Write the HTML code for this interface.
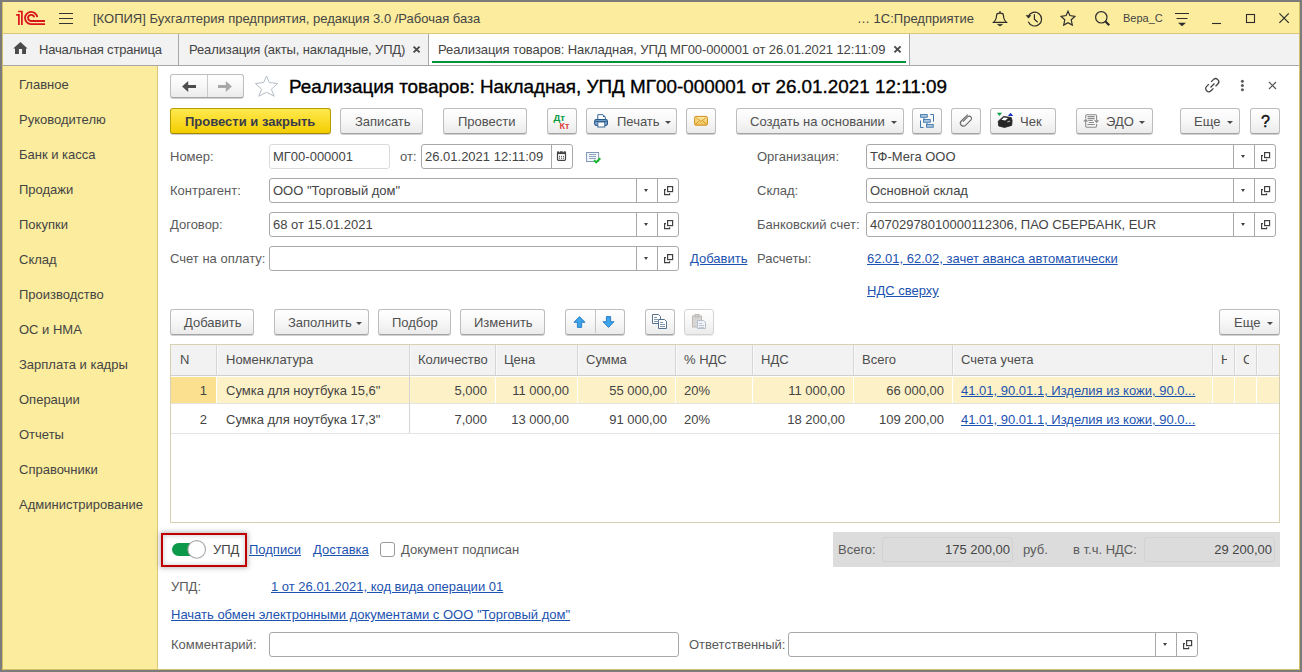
<!DOCTYPE html>
<html><head><meta charset="utf-8">
<style>
*{box-sizing:border-box;margin:0;padding:0}
html,body{width:1302px;height:672px;overflow:hidden;position:relative;background:#7b7b7b;font-family:"Liberation Sans",sans-serif;font-size:13px;color:#444}
.a{position:absolute}
.t{position:absolute;white-space:pre;line-height:16px}
.btn{position:absolute;height:26px;border:1px solid #bdbdbd;border-bottom-color:#a3a3a3;border-radius:3px;background:linear-gradient(#ffffff 0%,#f7f7f7 50%,#ebebeb 100%);box-shadow:0 1px 0 rgba(0,0,0,.18);color:#505050;white-space:pre;line-height:16px}
.btn .t{top:5px}
.ybtn{background:linear-gradient(#ffe94f,#f3cd00);border-color:#b89d00;border-bottom-color:#a08800;color:#3a3b4a}
.ybtn .t{font-weight:bold}
.fld{position:absolute;height:25px;border:1px solid #b5b5b5;border-radius:3px;background:#fff;white-space:pre;color:#444}
.fld .t{top:4px;left:3px}
.lbl{position:absolute;white-space:pre;color:#5a5a5a;line-height:16px}
.lnk{position:absolute;white-space:pre;color:#1c52b0;text-decoration:underline;line-height:16px}
.sep{position:absolute;top:0;width:1px;height:23px;background:#b5b5b5}
.tri{position:absolute;width:0;height:0;border-left:3px solid transparent;border-right:3px solid transparent;border-top:3px solid #4a4a4a}
.opn{position:absolute;width:11px;height:10px}
.side .t{left:19px;color:#444}
.hd{position:absolute;top:352px;white-space:pre;line-height:16px;color:#4d4d4d}
.r1{position:absolute;top:383px;white-space:pre;line-height:16px;color:#444}
.r2{position:absolute;top:412px;white-space:pre;line-height:16px;color:#444}
.rr{text-align:right}
</style></head><body>
<!-- window frame -->
<div class="a" style="left:2px;top:2px;width:1298px;height:668px;background:#fff;border:1px solid #d2bf6a;border-top:0"></div>
<!-- title bar -->
<div class="a" style="left:3px;top:2px;width:1296px;height:32px;background:#fbec9e;border-bottom:1px solid #d9c77a"></div>
<!-- tab bar -->
<div class="a" style="left:3px;top:34px;width:1296px;height:32px;background:#f2f2f2;border-bottom:1px solid #a8a8a8"></div>
<!-- sidebar -->
<div class="a" style="left:3px;top:66px;width:155px;height:603px;background:#fbec9e;border-right:1px solid #d9c77a"></div>

<!-- title contents -->
<svg class="a" style="left:0;top:0" width="1302" height="34" viewBox="0 0 1302 34">
 <g fill="none" stroke="#d9141b" stroke-width="1.8">
  <path d="M16.2 14.8 H18.9 V24.9 M18.1 11.5 H21.9 V24.9" stroke-width="1.7"/>
  <path d="M37.2 17.2 A6.1 6.1 0 1 0 31 24.05 H45"/>
  <path d="M34.2 17.3 A3.1 3.1 0 1 0 31 21.0 H45"/>
 </g>
 <g stroke="#333" stroke-width="1.2">
  <path d="M59 13.5 H73 M59 18.5 H73 M59 23.5 H73" stroke-width="1.15"/>
 </g>
 <!-- bell -->
 <g fill="none" stroke="#2b2b2b" stroke-width="1.2">
  <path d="M997.2 13.6 Q1000 12.6 1002.8 13.6 Q1003.6 15 1003.8 18 Q1004 20 1006.5 22.4 H993.5 Q996 20 996.2 18 Q996.4 15 997.2 13.6 Z"/>
  <path d="M1000 11.2 V12.8" stroke-width="1.6"/>
  <path d="M997.6 24.4 H1002.4 L1000 26 Z" fill="#2b2b2b" stroke-width="0.8"/>
 </g>
 <!-- history -->
 <g fill="none" stroke="#2b2b2b" stroke-width="1.2">
  <path d="M1028.4 16.2 A6.9 6.9 0 1 1 1028.3 21.7"/>
  <path d="M1034.4 14.2 V19.3 L1037.7 22.2"/>
  <path d="M1026.2 15.4 H1030.8 L1028.5 18.2 Z" fill="#2b2b2b" stroke-width="0.6"/>
 </g>
 <!-- star -->
 <path fill="none" stroke="#2b2b2b" stroke-width="1.2" stroke-linejoin="miter" d="M1068 11.2 L1069.9 15.5 L1074.9 16.4 L1071.2 19.8 L1072.3 25 L1068 22.7 L1063.7 25 L1064.8 19.8 L1061.1 16.4 L1066.1 15.5 Z"/>
 <!-- search -->
 <g fill="none" stroke="#2b2b2b">
  <circle cx="1101.3" cy="17.3" r="5.7" stroke-width="1.2"/>
  <path d="M1105.2 21.2 L1109.2 25.2" stroke-width="2.2"/>
 </g>
 <!-- menu -->
 <g stroke="#2b2b2b" stroke-width="1.2">
  <path d="M1175 13.5 H1189 M1176.5 18.5 H1187.5" stroke-width="1.1"/>
  <path d="M1178.6 23 H1185.4 L1182 26 Z" fill="#2b2b2b" stroke-width="0.5"/>
 </g>
 <!-- min max close -->
 <g fill="none" stroke="#2b2b2b" stroke-width="1.2">
  <path d="M1212 23.5 H1221" stroke-width="1.1"/>
  <rect x="1246.5" y="14.5" width="8" height="8" stroke-width="1.1"/>
  <path d="M1279.4 13.4 L1288.8 22.8 M1288.8 13.4 L1279.4 22.8"/>
 </g>
</svg>
<div class="t" style="left:93px;top:11px;color:#444">[КОПИЯ] Бухгалтерия предприятия, редакция 3.0 /Рабочая база</div>
<div class="t" style="left:857px;top:11px;color:#444">… 1С:Предприятие</div>
<div class="t" style="left:1123px;top:11px;font-size:11px;line-height:14px;color:#444">Вера_С</div>

<!-- tabs contents -->
<div class="a" style="left:178px;top:34px;width:1px;height:31px;background:#a8a8a8"></div>
<div class="a" style="left:428px;top:34px;width:1px;height:31px;background:#a8a8a8"></div>
<div class="a" style="left:429px;top:34px;width:480px;height:31px;background:#fff"></div>
<div class="a" style="left:909px;top:34px;width:1px;height:31px;background:#a8a8a8"></div>
<div class="a" style="left:432px;top:61px;width:474px;height:2px;background:#04923b"></div>
<svg class="a" style="left:0;top:34px" width="1302" height="32" viewBox="0 34 1302 32">
 <path fill="#4a4a4a" d="M20.4 42 L27.6 48.6 H26 V54 H22.1 V48.9 H18.9 V54 H15 V48.6 H13.2 Z"/>
 <g stroke="#4a4a4a" stroke-width="1.9">
  <path d="M413.6 46.6 L419.6 52.4 M419.6 46.6 L413.6 52.4"/>
  <path d="M894.4 46.4 L900.6 52.4 M900.6 46.4 L894.4 52.4"/>
 </g>
</svg>
<div class="t" style="left:39px;top:42px;color:#444;letter-spacing:-0.17px">Начальная страница</div>
<div class="t" style="left:189px;top:42px;color:#444;letter-spacing:-0.12px">Реализация (акты, накладные, УПД)</div>
<div class="t" style="left:438px;top:42px;color:#444;letter-spacing:-0.09px">Реализация товаров: Накладная, УПД МГ00-000001 от 26.01.2021 12:11:09</div>
<!-- sidebar items -->
<div class="side">
<div class="t" style="top:77px">Главное</div>
<div class="t" style="top:112px">Руководителю</div>
<div class="t" style="top:147px">Банк и касса</div>
<div class="t" style="top:182px">Продажи</div>
<div class="t" style="top:217px">Покупки</div>
<div class="t" style="top:252px">Склад</div>
<div class="t" style="top:287px">Производство</div>
<div class="t" style="top:322px">ОС и НМА</div>
<div class="t" style="top:357px">Зарплата и кадры</div>
<div class="t" style="top:392px">Операции</div>
<div class="t" style="top:427px">Отчеты</div>
<div class="t" style="top:462px">Справочники</div>
<div class="t" style="top:497px">Администрирование</div>
</div>

<!-- doc header -->
<div class="btn" style="left:170px;top:74px;width:74px;height:24px"></div>
<div class="a" style="left:207px;top:75px;width:1px;height:22px;background:#c9c9c9"></div>
<svg class="a" style="left:0;top:66px" width="1302" height="40" viewBox="0 66 1302 40">
 <path fill="#4d4d4d" d="M182.1 86.5 L188.2 81 V85 H196 V88 H188.2 V92.1 Z"/>
 <path fill="#a8a8a8" d="M231.9 86.5 L225.8 81 V85 H218 V88 H225.8 V92.1 Z"/>
 <path fill="none" stroke="#b4bcc6" stroke-width="1" d="M266.5 76 L269.3 82.5 L277.6 83.5 L271.4 89.2 L274.2 96.2 L266.5 92.3 L258.8 96.2 L261.6 89.2 L255.4 83.5 L263.7 82.5 Z"/>
 <!-- link icon -->
 <g fill="none" stroke="#444" stroke-width="1.3" stroke-linecap="butt">
  <path d="M1208.9 84.1 L1206.6 86.4 A3.1 3.1 0 0 0 1211 90.8 L1213.4 88.4"/>
  <path d="M1211.1 81.9 L1213.4 79.6 A3.1 3.1 0 0 1 1217.8 84 L1215.5 86.3"/>
  <path d="M1210.5 87.5 L1214.5 83.5"/>
 </g>
 <g fill="#5a5a5a"><circle cx="1242.4" cy="81.2" r="1.5"/><circle cx="1242.4" cy="85.5" r="1.5"/><circle cx="1242.4" cy="89.7" r="1.5"/></g>
 <path stroke="#555" stroke-width="1.2" d="M1269 82 L1276 89 M1276 82 L1269 89"/>
</svg>
<div class="t" style="left:289px;top:76px;font-size:18.88px;line-height:22px;color:#000;-webkit-text-stroke:0.35px #000">Реализация товаров: Накладная, УПД МГ00-000001 от 26.01.2021 12:11:09</div>

<!-- toolbar -->
<div class="btn ybtn" style="left:170px;top:108px;width:161px"><div class="t" style="left:14px;top:5px">Провести и закрыть</div></div>
<div class="btn" style="left:340px;top:108px;width:83px"><div class="t" style="left:14px">Записать</div></div>
<div class="btn" style="left:443px;top:108px;width:84px"><div class="t" style="left:14px">Провести</div></div>
<div class="btn" style="left:547px;top:108px;width:30px"></div>
<div class="t" style="left:553.5px;top:112px;font-size:9.5px;line-height:12px;font-weight:bold;color:#0a9a3e">Дт</div>
<div class="t" style="left:559.5px;top:120px;font-size:9px;line-height:12px;font-weight:bold;color:#e03c3c">Кт</div>
<div class="btn" style="left:586px;top:108px;width:91px"><div class="t" style="left:30px">Печать</div><div class="tri" style="left:78px;top:11.5px"></div></div>
<div class="btn" style="left:686px;top:108px;width:30px"></div>
<div class="btn" style="left:736px;top:108px;width:168px"><div class="t" style="left:13px">Создать на основании</div><div class="tri" style="left:154px;top:11.5px"></div></div>
<div class="btn" style="left:912px;top:108px;width:30px"></div>
<div class="btn" style="left:951px;top:108px;width:30px"></div>
<div class="btn" style="left:990px;top:108px;width:66px"><div class="t" style="left:29px">Чек</div></div>
<div class="btn" style="left:1076px;top:108px;width:77px"><div class="t" style="left:29px">ЭДО</div><div class="tri" style="left:62px;top:11.5px"></div></div>
<div class="btn" style="left:1180px;top:108px;width:60px"><div class="t" style="left:13px">Еще</div><div class="tri" style="left:46px;top:11.5px"></div></div>
<div class="btn" style="left:1250px;top:108px;width:30px"><div class="t" style="left:10px;top:2.6px;font-size:16px;line-height:20px;font-weight:normal;color:#111;-webkit-text-stroke:0.45px #111">?</div></div>
<svg class="a" style="left:0;top:106px" width="1302" height="30" viewBox="0 106 1302 30">
 <!-- printer -->
 <path fill="#fff" stroke="#3a6a9a" stroke-width="1" d="M597.8 119.5 V114.7 H603 L605.3 117 V119.5"/>
 <path fill="#3a6a9a" d="M603 114.7 V117 H605.3 Z"/>
 <rect x="594.7" y="119.7" width="12.7" height="5.6" rx="1.5" fill="#8fb0d4" stroke="#285a8c" stroke-width="1.2"/>
 <path fill="#285a8c" d="M595.5 121 H606.6 V122 H595.5 Z"/>
 <rect x="597.8" y="122" width="7" height="5" fill="#fff" stroke="#3a6a9a" stroke-width="1"/>
 <!-- envelope -->
 <defs><linearGradient id="env" x1="0" y1="0" x2="0" y2="1"><stop offset="0" stop-color="#fde9a6"/><stop offset="1" stop-color="#efbf55"/></linearGradient></defs>
 <rect x="694.6" y="116.4" width="12.8" height="8.8" rx="1.3" fill="url(#env)" stroke="#d2901e" stroke-width="1"/>
 <path fill="none" stroke="#d2901e" stroke-width="0.8" d="M695.5 117.3 L701 121.5 L706.5 117.3 M695.5 124.5 L699.5 120.5 M706.5 124.5 L702.5 120.5"/>
 <!-- structure -->
 <g stroke="#3f78aa" stroke-width="1">
  <rect x="920.6" y="114.6" width="6.6" height="2.6" fill="#bcd2e8"/>
  <rect x="923.6" y="119.6" width="6.6" height="2.6" fill="#bcd2e8"/>
  <rect x="926.6" y="124.6" width="6.6" height="2.6" fill="#bcd2e8"/>
  <path fill="none" d="M924 117.5 V119.5 M927 122.5 V124.5 M930.3 114.5 H933.5 V121.7 M920.5 120.5 V127.5 H923.5"/>
 </g>
 <!-- clip -->
 <path fill="none" stroke="#666" stroke-width="1.1" d="M967.8 114.6 L961.3 121 A3 3 0 0 0 965.5 125.3 L971 119.8 A2.2 2.2 0 0 0 967.9 116.7 L962.9 121.7"/>
 <!-- cheque printer -->
 <path fill="#0aa14a" d="M996.9 112.8 H1002.1 L999.5 116 Z"/>
 <path fill="#1a33c8" d="M1007.9 116 H1013.2 L1010.5 112.8 Z"/>
 <path fill="#262626" stroke="#262626" stroke-width="0.8" stroke-linejoin="round" d="M998.2 121.2 L1003.5 116.4 L1011.2 117.5 L1012.1 120.5 L1011.7 125.4 L1004.5 127.5 L998.7 126 Z"/>
 <path fill="#fff" d="M1001.4 119.7 L1003.9 117.4 L1008 118.1 L1005.4 120.4 Z"/>
 <path fill="#bbb" d="M1007.2 121.4 L1009.9 120.4 L1010.3 121.5 L1007.6 122.5 Z"/>
 <!-- EDO -->
 <g fill="none" stroke="#8c8c8c" stroke-width="1.1">
  <path d="M1085.7 118.5 V115.8 Q1085.7 114.7 1086.8 114.7 H1095.5 Q1096.6 114.7 1096.6 115.8 V120.5 M1096.6 124 V126.1 Q1096.6 127.2 1095.5 127.2 H1086.8 Q1085.7 127.2 1085.7 126.1 V121"/>
  <path d="M1087.5 116.6 H1094.7 M1087.5 118.6 H1094.7 M1088.3 120.5 H1092.9 M1088.8 122.5 H1093.9 M1087.5 124.5 H1094.7"/>
 </g>
 <path fill="#8c8c8c" d="M1083 121.6 L1085.7 118.7 L1088.4 121.6 Z M1094 120.3 H1099.2 L1096.6 123.3 Z"/>
</svg>

<!-- form -->
<div class="lbl" style="left:170px;top:149px">Номер:</div>
<div class="fld" style="left:269px;top:144px;width:121px;border-color:#dadada"><div class="t" style="left:3px;top:4px">МГ00-000001</div></div>
<div class="lbl" style="left:400px;top:149px">от:</div>
<div class="fld" style="left:421px;top:144px;width:152px;border-color:#a9a9a9"><div class="t" style="left:3px;top:4px">26.01.2021 12:11:09</div></div>
<div class="a" style="left:551px;top:145px;width:1px;height:23px;background:#a9a9a9"></div>
<svg class="a" style="left:550px;top:144px" width="60" height="25" viewBox="550 144 60 25">
 <rect x="557.5" y="152" width="8" height="8.3" rx="1" fill="#fff" stroke="#444" stroke-width="1.2"/>
 <rect x="557" y="151.5" width="9" height="2.6" fill="#444"/>
 <g fill="#444"><circle cx="559.5" cy="156.3" r=".6"/><circle cx="561.5" cy="156.3" r=".6"/><circle cx="563.5" cy="156.3" r=".6"/><circle cx="559.5" cy="158.2" r=".6"/><circle cx="561.5" cy="158.2" r=".6"/><circle cx="563.5" cy="158.2" r=".6"/></g>
 <path fill="#fff" d="M558.8 151 h1 v1.2 h-1z M562.8 151 h1 v1.2 h-1z"/>
 <rect x="586.6" y="152.5" width="12" height="9" fill="#f4f7fb" stroke="#7f96b6" stroke-width="1"/>
 <path stroke="#8ea2bd" stroke-width="1" d="M589 154.5 H596 M589 156.5 H596 M589 158.5 H596"/>
 <path fill="none" stroke="#18b82a" stroke-width="2" d="M594.2 160.2 L596.2 162.4 L600.3 158.3"/>
</svg>
<div class="lbl" style="left:170px;top:183px">Контрагент:</div>
<div class="fld" style="left:269px;top:178px;width:410px;border-color:#a9a9a9"><div class="t" style="left:3px;top:4px">ООО "Торговый дом"</div></div><div class="a" style="left:636px;top:179px;width:1px;height:23px;background:#a9a9a9"></div><div class="a" style="left:644px;top:189px;width:0;height:0;border-left:2.5px solid transparent;border-right:2.5px solid transparent;border-top:3px solid #404040"></div><div class="a" style="left:657px;top:179px;width:1px;height:23px;background:#a9a9a9"></div><svg class="a" style="left:657px;top:178px" width="21" height="25" viewBox="0 0 21 25"><g fill="none" stroke="#404040" stroke-width="1.2"><rect x="10.6" y="8.6" width="5" height="5"/><path d="M9 11.6 H7.6 V16.6 H12.6 V15.2"/></g></svg>
<div class="lbl" style="left:170px;top:217px">Договор:</div>
<div class="fld" style="left:269px;top:212px;width:410px;border-color:#a9a9a9"><div class="t" style="left:3px;top:4px">68 от 15.01.2021</div></div><div class="a" style="left:636px;top:213px;width:1px;height:23px;background:#a9a9a9"></div><div class="a" style="left:644px;top:223px;width:0;height:0;border-left:2.5px solid transparent;border-right:2.5px solid transparent;border-top:3px solid #404040"></div><div class="a" style="left:657px;top:213px;width:1px;height:23px;background:#a9a9a9"></div><svg class="a" style="left:657px;top:212px" width="21" height="25" viewBox="0 0 21 25"><g fill="none" stroke="#404040" stroke-width="1.2"><rect x="10.6" y="8.6" width="5" height="5"/><path d="M9 11.6 H7.6 V16.6 H12.6 V15.2"/></g></svg>
<div class="lbl" style="left:170px;top:251px">Счет на оплату:</div>
<div class="fld" style="left:269px;top:246px;width:410px;border-color:#a9a9a9"></div><div class="a" style="left:636px;top:247px;width:1px;height:23px;background:#a9a9a9"></div><div class="a" style="left:644px;top:257px;width:0;height:0;border-left:2.5px solid transparent;border-right:2.5px solid transparent;border-top:3px solid #404040"></div><div class="a" style="left:657px;top:247px;width:1px;height:23px;background:#a9a9a9"></div><svg class="a" style="left:657px;top:246px" width="21" height="25" viewBox="0 0 21 25"><g fill="none" stroke="#404040" stroke-width="1.2"><rect x="10.6" y="8.6" width="5" height="5"/><path d="M9 11.6 H7.6 V16.6 H12.6 V15.2"/></g></svg>
<div class="lnk" style="left:690px;top:251px">Добавить</div>
<div class="lbl" style="left:757px;top:149px">Организация:</div>
<div class="fld" style="left:866px;top:144px;width:410px;border-color:#a9a9a9"><div class="t" style="left:3px;top:4px">ТФ-Мега ООО</div></div><div class="a" style="left:1233px;top:145px;width:1px;height:23px;background:#a9a9a9"></div><div class="a" style="left:1241px;top:155px;width:0;height:0;border-left:2.5px solid transparent;border-right:2.5px solid transparent;border-top:3px solid #404040"></div><div class="a" style="left:1254px;top:145px;width:1px;height:23px;background:#a9a9a9"></div><svg class="a" style="left:1254px;top:144px" width="21" height="25" viewBox="0 0 21 25"><g fill="none" stroke="#404040" stroke-width="1.2"><rect x="10.6" y="8.6" width="5" height="5"/><path d="M9 11.6 H7.6 V16.6 H12.6 V15.2"/></g></svg>
<div class="lbl" style="left:757px;top:183px">Склад:</div>
<div class="fld" style="left:866px;top:178px;width:410px;border-color:#a9a9a9"><div class="t" style="left:3px;top:4px">Основной склад</div></div><div class="a" style="left:1233px;top:179px;width:1px;height:23px;background:#a9a9a9"></div><div class="a" style="left:1241px;top:189px;width:0;height:0;border-left:2.5px solid transparent;border-right:2.5px solid transparent;border-top:3px solid #404040"></div><div class="a" style="left:1254px;top:179px;width:1px;height:23px;background:#a9a9a9"></div><svg class="a" style="left:1254px;top:178px" width="21" height="25" viewBox="0 0 21 25"><g fill="none" stroke="#404040" stroke-width="1.2"><rect x="10.6" y="8.6" width="5" height="5"/><path d="M9 11.6 H7.6 V16.6 H12.6 V15.2"/></g></svg>
<div class="lbl" style="left:757px;top:217px">Банковский счет:</div>
<div class="fld" style="left:866px;top:212px;width:410px;border-color:#a9a9a9"><div class="t" style="left:3px;top:4px">40702978010000112306, ПАО СБЕРБАНК, EUR</div></div><div class="a" style="left:1233px;top:213px;width:1px;height:23px;background:#a9a9a9"></div><div class="a" style="left:1241px;top:223px;width:0;height:0;border-left:2.5px solid transparent;border-right:2.5px solid transparent;border-top:3px solid #404040"></div><div class="a" style="left:1254px;top:213px;width:1px;height:23px;background:#a9a9a9"></div><svg class="a" style="left:1254px;top:212px" width="21" height="25" viewBox="0 0 21 25"><g fill="none" stroke="#404040" stroke-width="1.2"><rect x="10.6" y="8.6" width="5" height="5"/><path d="M9 11.6 H7.6 V16.6 H12.6 V15.2"/></g></svg>
<div class="lbl" style="left:757px;top:251px">Расчеты:</div>
<div class="lnk" style="left:867px;top:251px">62.01, 62.02, зачет аванса автоматически</div>
<div class="lnk" style="left:867px;top:283px">НДС сверху</div>

<!-- table toolbar -->
<div class="btn" style="left:170px;top:309px;width:84px"><div class="t" style="left:13px">Добавить</div></div>
<div class="btn" style="left:274px;top:309px;width:95px"><div class="t" style="left:13px">Заполнить</div><div class="tri" style="left:81px;top:11.5px"></div></div>
<div class="btn" style="left:378px;top:309px;width:73px"><div class="t" style="left:13px">Подбор</div></div>
<div class="btn" style="left:460px;top:309px;width:85px"><div class="t" style="left:13px">Изменить</div></div>
<div class="btn" style="left:565px;top:309px;width:60px"></div>
<div class="a" style="left:595px;top:310px;width:1px;height:23px;background:#c4c4c4"></div>
<div class="btn" style="left:645px;top:309px;width:30px"></div>
<div class="btn" style="left:684px;top:309px;width:30px;border-color:#d4d4d4;box-shadow:0 1px 0 rgba(0,0,0,.08)"></div>
<div class="btn" style="left:1219px;top:309px;width:61px"><div class="t" style="left:14px">Еще</div><div class="tri" style="left:47px;top:11.5px"></div></div>
<svg class="a" style="left:560px;top:306px" width="160" height="32" viewBox="560 306 160 32">
 <path fill="#3ea4ea" stroke="#2178c4" stroke-width="0.9" d="M579.5 316.6 L585 322.3 H581.6 V327.4 H577.4 V322.3 H574 Z"/>
 <path fill="#3ea4ea" stroke="#2178c4" stroke-width="0.9" d="M608.5 327.4 L614 321.7 H610.6 V316.6 H606.4 V321.7 H603 Z"/>
 <g stroke="#58718f" stroke-width="1">
  <path fill="#fff" d="M652.5 314.5 H658.5 L660.5 316.5 V323.5 H652.5 Z"/>
  <path fill="#fff" d="M658.5 319.5 H664.5 L666.5 321.5 V328.5 H658.5 Z"/>
  <path fill="none" stroke="#8196b0" stroke-width="1" d="M654 317.5 H657 M654 319.5 H659 M654 321.5 H659 M660 322.5 H663 M660 324.5 H665 M660 326.5 H665"/>
 </g>
 <g stroke="#b9b9b9" stroke-width="1">
  <rect x="692.5" y="316" width="9" height="11" fill="#d6d6d6" stroke="#c2b8ae"/>
  <rect x="695" y="314.5" width="4" height="2.5" fill="#d0d0d0"/>
  <path fill="#eef1f5" stroke="#b6c0cc" d="M697.5 320.5 H703.5 L705.5 322.5 V328.5 H697.5 Z"/>
  <path fill="none" stroke="#c0c8d2" stroke-width="1" d="M699 323.5 H702 M699 325.5 H704 M699 327.5 H704"/>
 </g>
</svg>
<!-- table -->
<div class="a" style="left:170px;top:344px;width:1110px;height:179px;border:1px solid #d7d0b3;background:#fff"></div>
<div class="a" style="left:171px;top:345px;width:1108px;height:30px;background:#f2f2f2"></div>
<div class="a" style="left:171px;top:375px;width:1108px;height:1px;background:#cfcfcf"></div>
<div class="a" style="left:171px;top:377px;width:1108px;height:26px;background:#fdf2c7"></div>
<div class="a" style="left:171px;top:377px;width:45px;height:26px;background:#fbe08f"></div>
<div class="a" style="left:171px;top:403px;width:1108px;height:1px;background:#e4e4e4"></div>
<div class="a" style="left:171px;top:433px;width:1108px;height:1px;background:#e4e4e4"></div>
<div class="a" style="left:216px;top:345px;width:1px;height:30px;background:#d6d6d6"></div><div class="a" style="left:217px;top:345px;width:1px;height:30px;background:#fafafa"></div><div class="a" style="left:216px;top:377px;width:1px;height:26px;background:#fff"></div>
<div class="a" style="left:409px;top:345px;width:1px;height:30px;background:#d6d6d6"></div><div class="a" style="left:410px;top:345px;width:1px;height:30px;background:#fafafa"></div><div class="a" style="left:409px;top:377px;width:1px;height:26px;background:#fff"></div>
<div class="a" style="left:495px;top:345px;width:1px;height:30px;background:#d6d6d6"></div><div class="a" style="left:496px;top:345px;width:1px;height:30px;background:#fafafa"></div><div class="a" style="left:495px;top:377px;width:1px;height:26px;background:#fff"></div>
<div class="a" style="left:577px;top:345px;width:1px;height:30px;background:#d6d6d6"></div><div class="a" style="left:578px;top:345px;width:1px;height:30px;background:#fafafa"></div><div class="a" style="left:577px;top:377px;width:1px;height:26px;background:#fff"></div>
<div class="a" style="left:675px;top:345px;width:1px;height:30px;background:#d6d6d6"></div><div class="a" style="left:676px;top:345px;width:1px;height:30px;background:#fafafa"></div><div class="a" style="left:675px;top:377px;width:1px;height:26px;background:#fff"></div>
<div class="a" style="left:752px;top:345px;width:1px;height:30px;background:#d6d6d6"></div><div class="a" style="left:753px;top:345px;width:1px;height:30px;background:#fafafa"></div><div class="a" style="left:752px;top:377px;width:1px;height:26px;background:#fff"></div>
<div class="a" style="left:853px;top:345px;width:1px;height:30px;background:#d6d6d6"></div><div class="a" style="left:854px;top:345px;width:1px;height:30px;background:#fafafa"></div><div class="a" style="left:853px;top:377px;width:1px;height:26px;background:#fff"></div>
<div class="a" style="left:952px;top:345px;width:1px;height:30px;background:#d6d6d6"></div><div class="a" style="left:953px;top:345px;width:1px;height:30px;background:#fafafa"></div><div class="a" style="left:952px;top:377px;width:1px;height:26px;background:#fff"></div>
<div class="a" style="left:1212px;top:345px;width:1px;height:30px;background:#d6d6d6"></div><div class="a" style="left:1213px;top:345px;width:1px;height:30px;background:#fafafa"></div><div class="a" style="left:1212px;top:377px;width:1px;height:26px;background:#fff"></div>
<div class="a" style="left:1234px;top:345px;width:1px;height:30px;background:#d6d6d6"></div><div class="a" style="left:1235px;top:345px;width:1px;height:30px;background:#fafafa"></div><div class="a" style="left:1234px;top:377px;width:1px;height:26px;background:#fff"></div>
<div class="a" style="left:1256px;top:345px;width:1px;height:30px;background:#d6d6d6"></div><div class="a" style="left:1257px;top:345px;width:1px;height:30px;background:#fafafa"></div><div class="a" style="left:1256px;top:377px;width:1px;height:26px;background:#fff"></div>
<div class="a" style="left:409px;top:376px;width:1px;height:57px;background:#d6d6d6"></div>
<div class="hd" style="left:180px">N</div>
<div class="hd" style="left:226px">Номенклатура</div>
<div class="hd" style="left:418px">Количество</div>
<div class="hd" style="left:504px">Цена</div>
<div class="hd" style="left:586px">Сумма</div>
<div class="hd" style="left:684px">% НДС</div>
<div class="hd" style="left:761px">НДС</div>
<div class="hd" style="left:862px">Всего</div>
<div class="hd" style="left:961px">Счета учета</div>
<div class="a" style="left:1213px;top:345px;width:14px;height:30px;overflow:hidden"><div class="hd" style="left:8px;top:7px">Н</div></div>
<div class="a" style="left:1235px;top:345px;width:14px;height:30px;overflow:hidden"><div class="hd" style="left:8px;top:7px">С</div></div>
<div class="r1 rr" style="left:7px;width:200px;top:383px">1</div>
<div class="r1 rr" style="left:287px;width:200px;top:383px">5,000</div>
<div class="r1 rr" style="left:369px;width:200px;top:383px">11 000,00</div>
<div class="r1 rr" style="left:467px;width:200px;top:383px">55 000,00</div>
<div class="r1 rr" style="left:645px;width:200px;top:383px">11 000,00</div>
<div class="r1 rr" style="left:744px;width:200px;top:383px">66 000,00</div>
<div class="r2 rr" style="left:7px;width:200px;top:412px">2</div>
<div class="r2 rr" style="left:287px;width:200px;top:412px">7,000</div>
<div class="r2 rr" style="left:369px;width:200px;top:412px">13 000,00</div>
<div class="r2 rr" style="left:467px;width:200px;top:412px">91 000,00</div>
<div class="r2 rr" style="left:645px;width:200px;top:412px">18 200,00</div>
<div class="r2 rr" style="left:744px;width:200px;top:412px">109 200,00</div>
<div class="r1" style="left:226px">Сумка для ноутбука 15,6"</div>
<div class="r2" style="left:226px">Сумка для ноутбука 17,3"</div>
<div class="r1" style="left:684px">20%</div>
<div class="r2" style="left:684px">20%</div>
<div class="lnk" style="left:961px;top:383px">41.01, 90.01.1, Изделия из кожи, 90.0...</div>
<div class="lnk" style="left:961px;top:412px">41.01, 90.01.1, Изделия из кожи, 90.0...</div>

<!-- bottom -->
<div class="a" style="left:161px;top:533px;width:86px;height:34px;border:2px solid #c00000;box-shadow:0 0 5px 1px rgba(0,0,0,.28), inset 0 0 4px 1px rgba(0,0,0,.16)"></div>
<svg class="a" style="left:160px;top:532px" width="60" height="36" viewBox="160 532 60 36">
 <rect x="172" y="543" width="26" height="13" rx="6.5" fill="#0c9a4a"/>
 <circle cx="196.7" cy="549.4" r="8.8" fill="#fff" stroke="#a8a8a8" stroke-width="1.1"/>
</svg>
<div class="lbl" style="left:213px;top:542px;color:#444">УПД</div>
<div class="lnk" style="left:249px;top:542px">Подписи</div>
<div class="lnk" style="left:313px;top:542px">Доставка</div>
<div class="a" style="left:380px;top:542px;width:15px;height:15px;border:1px solid #9a9a9a;border-radius:3px;background:#fff"></div>
<div class="lbl" style="left:401px;top:542px">Документ подписан</div>
<div class="a" style="left:833px;top:532px;width:447px;height:35px;background:#dcdcdc"></div>
<div class="a" style="left:882px;top:537px;width:131px;height:25px;border:1px solid #d2d2d2;border-radius:3px"></div>
<div class="a" style="left:1144px;top:537px;width:131px;height:25px;border:1px solid #d2d2d2;border-radius:3px"></div>
<div class="lbl" style="left:838px;top:542px">Всего:</div>
<div class="lbl rr" style="left:810px;width:200px;top:542px;color:#444">175 200,00</div>
<div class="lbl" style="left:1023px;top:542px">руб.</div>
<div class="lbl" style="left:1073px;top:542px">в т.ч. НДС:</div>
<div class="lbl rr" style="left:1072px;width:200px;top:542px;color:#444">29 200,00</div>
<div class="lbl" style="left:171px;top:579px">УПД:</div>
<div class="lnk" style="left:271px;top:579px">1 от 26.01.2021, код вида операции 01</div>
<div class="lnk" style="left:171px;top:607px">Начать обмен электронными документами с ООО "Торговый дом"</div>
<div class="lbl" style="left:171px;top:637px">Комментарий:</div>
<div class="fld" style="left:269px;top:632px;width:410px;border-color:#a9a9a9"></div>
<div class="lbl" style="left:689px;top:637px">Ответственный:</div>
<div class="fld" style="left:788px;top:632px;width:410px;border-color:#a9a9a9"></div><div class="a" style="left:1155px;top:633px;width:1px;height:23px;background:#a9a9a9"></div><div class="a" style="left:1163px;top:643px;width:0;height:0;border-left:2.5px solid transparent;border-right:2.5px solid transparent;border-top:3px solid #404040"></div><div class="a" style="left:1176px;top:633px;width:1px;height:23px;background:#a9a9a9"></div><svg class="a" style="left:1176px;top:632px" width="21" height="25" viewBox="0 0 21 25"><g fill="none" stroke="#404040" stroke-width="1.2"><rect x="10.6" y="8.6" width="5" height="5"/><path d="M9 11.6 H7.6 V16.6 H12.6 V15.2"/></g></svg>
</body></html>
